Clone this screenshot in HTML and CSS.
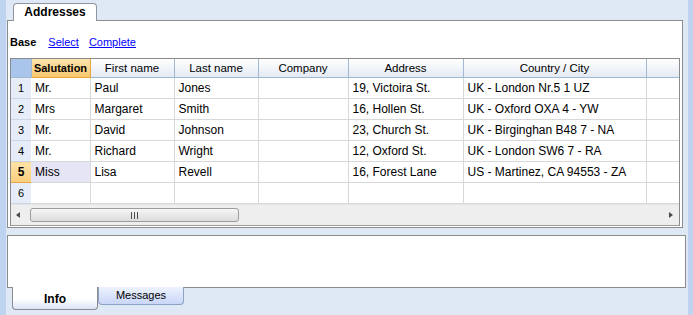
FILE: index.html
```html
<!DOCTYPE html>
<html lang="en">
<head>
    <meta charset="UTF-8">
    <title>Addresses</title>
    <link rel="stylesheet" href="styles.css">
</head>
<body>
    <div class="app">
        <div class="edge"></div>

        <div class="workspace">
            <div class="tabs-top">
                <span class="tab tab-active">Addresses</span>
            </div>

            <section class="panel">
                <nav class="views">
                    <b>Base</b>
                    <a href="#">Select</a>
                    <a href="#">Complete</a>
                </nav>

                <div class="grid-box">
                    <table class="grid">
                        <colgroup>
                            <col style="width:20px">
                            <col style="width:59px">
                            <col style="width:84px">
                            <col style="width:84px">
                            <col style="width:90px">
                            <col style="width:115px">
                            <col style="width:183px">
                            <col>
                        </colgroup>
                        <thead>
                            <tr>
                                <th class="corner"></th>
                                <th class="current">Salutation</th>
                                <th>First name</th>
                                <th>Last name</th>
                                <th>Company</th>
                                <th>Address</th>
                                <th>Country / City</th>
                                <th></th>
                            </tr>
                        </thead>
                        <tbody>
                            <tr>
                                <td class="num">1</td><td>Mr.</td><td>Paul</td><td>Jones</td><td></td>
                                <td>19, Victoira St.</td><td>UK - London Nr.5 1 UZ</td><td></td>
                            </tr>
                            <tr>
                                <td class="num">2</td><td>Mrs</td><td>Margaret</td><td>Smith</td><td></td>
                                <td>16, Hollen St.</td><td>UK - Oxford OXA 4 - YW</td><td></td>
                            </tr>
                            <tr>
                                <td class="num">3</td><td>Mr.</td><td>David</td><td>Johnson</td><td></td>
                                <td>23, Church St.</td><td>UK - Birginghan B48 7 - NA</td><td></td>
                            </tr>
                            <tr>
                                <td class="num">4</td><td>Mr.</td><td>Richard</td><td>Wright</td><td></td>
                                <td>12, Oxford St.</td><td>UK - London SW6 7 - RA</td><td></td>
                            </tr>
                            <tr>
                                <td class="num num-current">5</td><td class="selected">Miss</td><td>Lisa</td><td>Revell</td><td></td>
                                <td>16, Forest Lane</td><td>US - Martinez, CA 94553 - ZA</td><td></td>
                            </tr>
                            <tr>
                                <td class="num">6</td><td></td><td></td><td></td><td></td>
                                <td></td><td></td><td></td>
                            </tr>
                        </tbody>
                    </table>

                    <div class="hscroll">
                        <span class="arrow arrow-left"></span>
                        <div class="track">
                            <div class="thumb"><span class="grip"></span></div>
                        </div>
                        <span class="arrow arrow-right"></span>
                    </div>
                </div>
            </section>

            <section class="panel panel-info"></section>

            <div class="tabs-bottom">
                <span class="tab-b tab-b-active">Info</span>
                <span class="tab-b">Messages</span>
            </div>
        </div>

        <div class="edge edge-right"></div>
    </div>
</body>
</html>
```

FILE: styles.css
```css
body {
    margin: 0;
    font-family: "Liberation Sans", Arial, sans-serif;
    font-size: 12px;
    color: #000;
    background-color: #dfe9f5;
}

.app {
    display: flex;
    height: 315px;
    overflow: hidden;
}

.edge {
    width: 6px;
    background-color: #bdd3ef;
    flex: none;
}

.edge-right {
    width: 5px;
}

.workspace {
    flex: 1;
    padding: 0 0 0 1px;
    display: flex;
    flex-direction: column;
}

/* top tab strip */
.tabs-top {
    height: 20px;
    padding: 3px 0 0 6px;
    box-sizing: border-box;
    display: flex;
    align-items: flex-end;
}

.tab {
    display: inline-block;
    width: 84px;
    height: 18px;
    box-sizing: border-box;
    border: 1px solid #8f959c;
    border-bottom: none;
    border-radius: 4px 4px 0 0;
    background-color: #fff;
    font-weight: bold;
    text-align: center;
    line-height: 16px;
    margin-bottom: -1px;
    position: relative;
}

.panel {
    background-color: #fff;
    border: 1px solid #8c8c8c;
    height: 208px;
    box-sizing: border-box;
    padding: 0 2px 0 2px;
    margin-right: 5px;
}

.views {
    height: 37px;
    box-sizing: border-box;
    padding-top: 15px;
    font-size: 11px;
    display: flex;
    gap: 10px;
}

.views b {
    margin-right: 2px;
}

.views a {
    color: #0000ff;
}

/* grid */
.grid-box {
    border: 1px solid #8a8a8a;
    border-bottom-color: #9a9a9a;
}

.grid {
    border-collapse: collapse;
    table-layout: fixed;
    width: 100%;
}

.grid th {
    height: 18px;
    padding: 0;
    font-weight: normal;
    font-size: 11.5px;
    background: linear-gradient(#ffffff, #e3e9f3);
    border-right: 1px solid #a3b9d2;
    border-bottom: 1px solid #a3b9d2;
    white-space: nowrap;
    overflow: hidden;
}

.grid th:last-child {
    border-right: none;
}

.grid th.corner {
    background: #a9c5eb;
}

.grid th.current {
    font-weight: bold;
    font-size: 11px;
    background: linear-gradient(#fce4ae, #f8c66e);
    border-right-color: #e9a444;
    border-bottom-color: #e9a444;
}

.grid td {
    height: 20px;
    padding: 0 0 0 4px;
    border-right: 1px solid #d8d8d8;
    border-bottom: 1px solid #d8d8d8;
    white-space: nowrap;
    overflow: hidden;
}

.grid td:last-child {
    border-right: none;
}

.grid td.num {
    padding: 0;
    text-align: center;
    font-size: 11px;
    background-color: #e6edf8;
    border-right: none;
    border-bottom-color: #c9d6e8;
}

.grid td.num-current {
    font-weight: bold;
    font-size: 12px;
    background: linear-gradient(#fde3a8, #fbcf7e);
    border-bottom: 1px solid #e9a444;
}

.grid td.selected {
    background-color: #e5e5f6;
}

/* horizontal scrollbar */
.hscroll {
    height: 20px;
    background-color: #eeeeef;
    display: flex;
    align-items: center;
    border-top: 1px solid #e4e4e4;
}

.arrow {
    width: 0;
    height: 0;
    border-top: 3px solid transparent;
    border-bottom: 3px solid transparent;
    flex: none;
}

.arrow-left {
    border-right: 4px solid #4a4a4a;
    margin: 0 10px 0 5px;
}

.arrow-right {
    border-left: 4px solid #4a4a4a;
    margin: 0 6px 0 12px;
}

.track {
    flex: 1;
    height: 14px;
}

.thumb {
    width: 209px;
    height: 14px;
    box-sizing: border-box;
    border: 1px solid #9c9c9c;
    border-radius: 3px;
    background: linear-gradient(#f6f6f6, #dcdcdc);
    display: flex;
    justify-content: center;
    align-items: center;
}

.grip {
    width: 7px;
    height: 7px;
    background: repeating-linear-gradient(90deg, #4d4d4d 0 1px, transparent 1px 3px);
}

/* info panel */
.panel-info {
    margin-top: 7px;
    height: 53px;
    margin-right: 2px;
}

.tabs-bottom {
    display: flex;
    padding-left: 5px;
    margin-top: -1px;
}

.tab-b {
    width: 86px;
    height: 18px;
    box-sizing: border-box;
    border: 1px solid #8ea3c4;
    border-top: none;
    border-radius: 0 0 4px 4px;
    background: linear-gradient(#edf2fd, #c9d6f7);
    text-align: center;
    font-size: 11px;
    line-height: 16px;
}

.tab-b-active {
    height: 23px;
    border-color: #8c8c8c;
    background: linear-gradient(#ffffff 55%, #dbe3f8);
    font-weight: bold;
    font-size: 12px;
    line-height: 24px;
}
```
